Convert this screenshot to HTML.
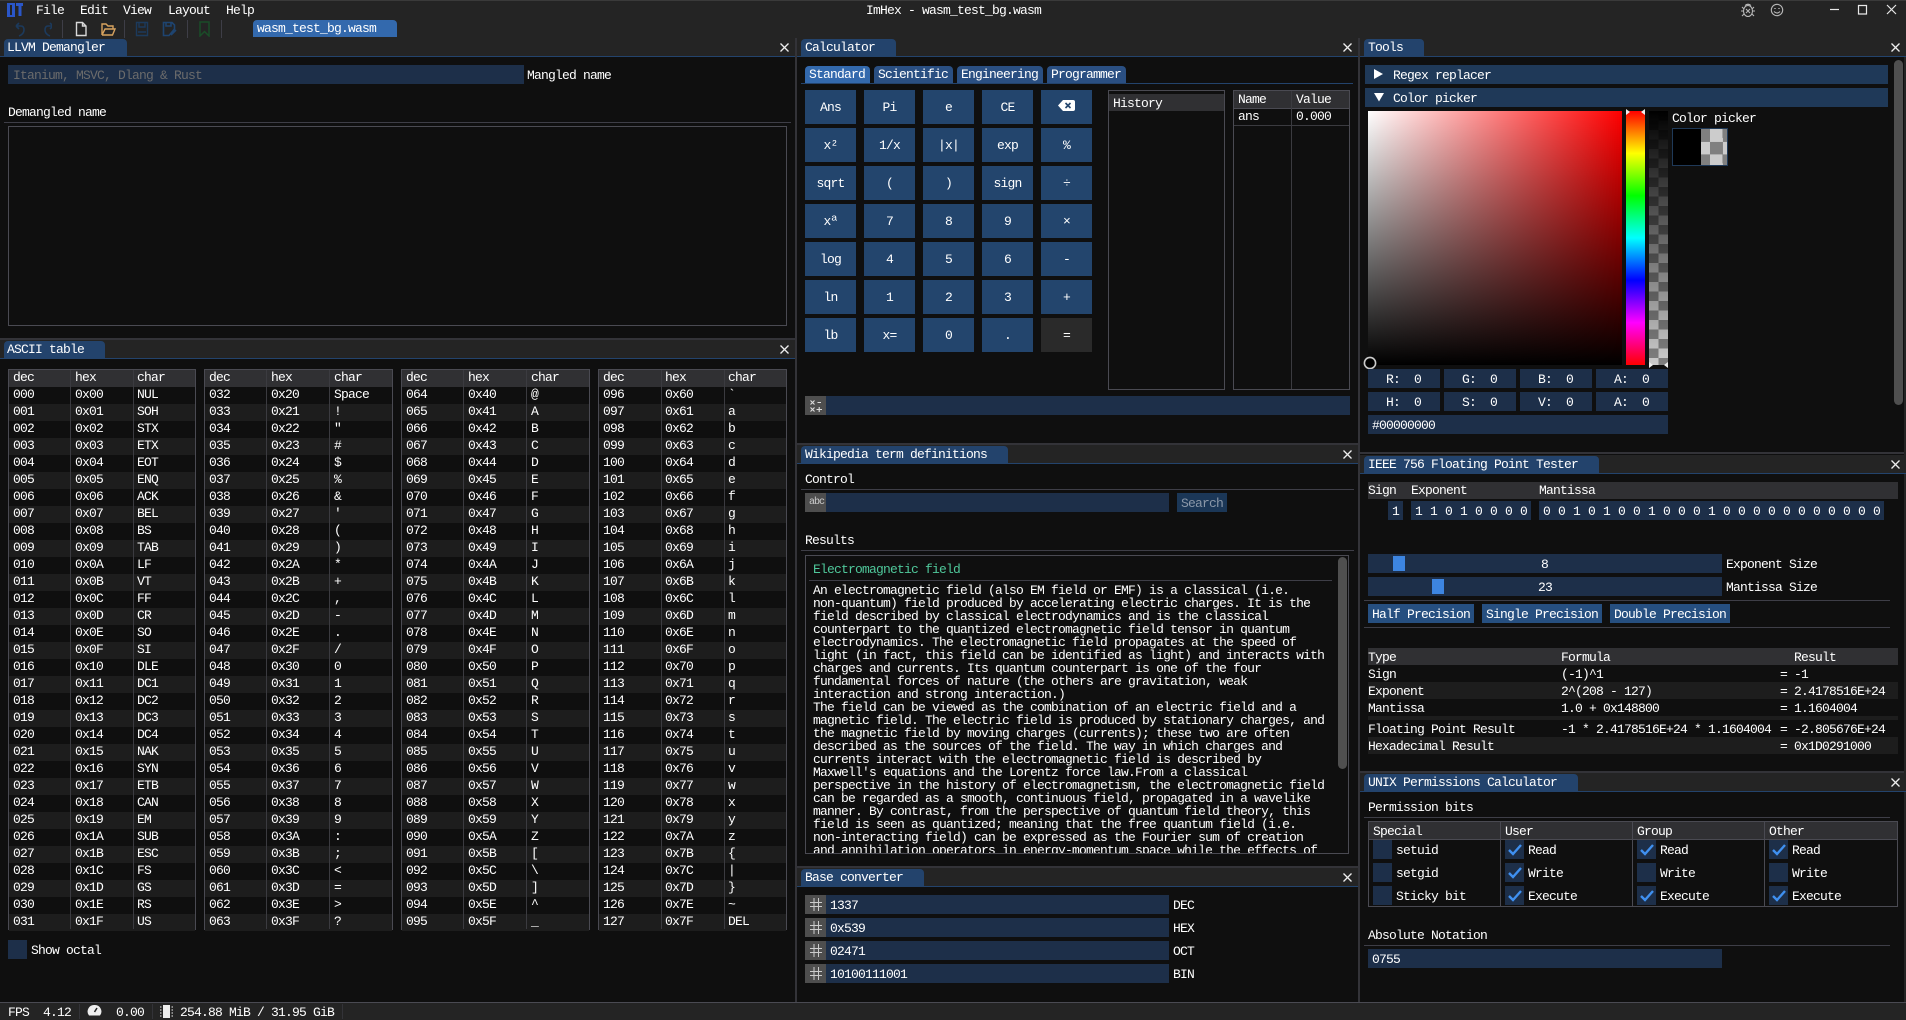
<!DOCTYPE html>
<html><head><meta charset="utf-8"><title>ImHex</title>
<style>
html,body{margin:0;padding:0;background:#0f0f0f}
#r{position:relative;width:1906px;height:1020px;overflow:hidden;background:#0f0f0f;font:13px/14px "Liberation Mono",monospace;letter-spacing:-.8px;color:#fff}
#r div,#r svg{position:absolute;display:block}
b{position:absolute;font-weight:normal;white-space:pre;transform:translateY(1px)}
.tb{background:#242424;height:18px}
.ln{background:#23436c;height:1px}
.tab{background:#23436c;border-radius:4px 4px 0 0;height:17px;overflow:visible}
.tab b{left:4px;top:1px}
.sp{background:#333338}
.sep{background:#3e3e47;height:1px}
.in{background:#1d2f49;height:19px}
.ic{background:#4e4e4e;height:19px;width:21px}
.btn{background:#23456d;display:flex!important;align-items:center;justify-content:center;box-sizing:border-box;padding-top:2px}
.h{background:#1f3958;height:19px}
.bd{box-sizing:border-box;border:1px solid #4a4a52}
.th{background:#303033;height:17px}
.st{background:#1d1d1d;height:17px}
.cb{background:#1d2f49;width:19px;height:19px}
.vl{background:#3b3b40;width:1px}
.at{top:369px;height:561px;box-sizing:border-box;border:1px solid #4a4a52;background:#0f0f0f}
.at p{margin:0;height:17px;display:flex;padding-left:4px}
.at p:nth-child(odd){background:#1d1d1d}
.at p:first-child{background:#303033}
.at p b{position:static;width:62px;flex:none}
.at p b+b{width:63px}
.at.f p b+b{width:62px}
.wp{font:13px/13px "Liberation Mono",monospace;letter-spacing:-.8px;margin:0;left:813px;top:584px;white-space:pre;position:absolute}
</style></head><body><div id="r">

<!-- title/menu -->
<div style="left:0;top:0;width:1906px;height:38px;background:#242424"></div>
<div style="left:0;top:0;width:1906px;height:1px;background:#3a3a3a"></div>
<svg style="left:7px;top:2px" width="17" height="16" viewBox="0 0 17 16"><path d="M0 1H8V15H0Z M3 3V13H5V3Z" fill="#2a56c8" fill-rule="evenodd"/><path d="M9 1H16V4H14.5V14H11.5V4H9Z" fill="#2a56c8"/></svg>
<b style="left:36px;top:3px">File</b><b style="left:80px;top:3px">Edit</b><b style="left:123px;top:3px">View</b><b style="left:168px;top:3px">Layout</b><b style="left:226px;top:3px">Help</b>
<b style="left:866px;top:3px">ImHex - wasm_test_bg.wasm</b>

<!-- toolbar icons -->
<svg style="left:12px;top:21px" width="40" height="17" viewBox="0 0 40 17" fill="none" stroke="#1c3a5c" stroke-width="1.6"><path d="M4 5L7 2M4 5L7 8M4 5H9Q12 5 12 9T7 15"/><path d="M41 5L38 2M41 5L38 8M41 5H36Q33 5 33 9T38 15"/></svg>
<div style="left:62px;top:20px;width:1px;height:18px;background:#3e3e47"></div>
<svg style="left:74px;top:21px" width="14" height="16" viewBox="0 0 14 16" fill="none" stroke="#d8d8d8" stroke-width="1.4"><path d="M2.5 1.5H8.5L12 5V14.5H2.5ZM8.5 1.5V5H12"/></svg>
<svg style="left:100px;top:21px" width="16" height="16" viewBox="0 0 16 16" fill="none" stroke="#d8a35e" stroke-width="1.4"><path d="M2 14V3H6L8 5H13V8M2 14H12.5L15 8H5L2 14"/></svg>
<div style="left:124px;top:20px;width:1px;height:18px;background:#3e3e47"></div>
<svg style="left:135px;top:21px" width="14" height="16" viewBox="0 0 14 16" fill="none" stroke="#1c3a5c" stroke-width="1.4"><path d="M1.5 1.5H12.5V14.5H1.5ZM4 1.5V6H10V1.5M3 11H11"/></svg>
<svg style="left:162px;top:21px" width="16" height="16" viewBox="0 0 16 16" fill="none" stroke="#1e4470" stroke-width="1.6"><path d="M1.5 1.5H10L12.5 4V8L7 14.5H1.5ZM4 1.5V5H9V1.5M14 9L9 14"/></svg>
<div style="left:187px;top:20px;width:1px;height:18px;background:#3e3e47"></div>
<svg style="left:199px;top:21px" width="11" height="16" viewBox="0 0 11 16" fill="none" stroke="#1a4d28" stroke-width="1.5"><path d="M1 1H10V15L5.5 10.5L1 15Z"/></svg>
<div style="left:221px;top:20px;width:1px;height:18px;background:#3e3e47"></div>
<div style="left:253px;top:20px;width:144px;height:17px;background:#3369ad;border-radius:4px 4px 0 0"><b style="left:4px;top:1px">wasm_test_bg.wasm</b></div>

<!-- window controls -->
<svg style="left:1739px;top:2px" width="18" height="16" viewBox="0 0 18 16" fill="none" stroke="#b8b8b8" stroke-width="1.1"><ellipse cx="9" cy="9" rx="4.5" ry="5.5"/><path d="M6 3.5Q9 1 12 3.5M3 5L5 7M15 5L13 7M2 9H4.5M16 9H13.5M3 14L5 12M15 14L13 12M7 7L11 11M11 7L7 11"/></svg>
<svg style="left:1769px;top:2px" width="16" height="16" viewBox="0 0 16 16" fill="none" stroke="#b8b8b8" stroke-width="1.1"><circle cx="8" cy="8" r="5.7"/><path d="M5 9.5Q8 12.5 11 9.5"/><path d="M6 6V7M10 6V7" stroke-width="1.4"/></svg>
<svg style="left:1828px;top:2px" width="70" height="16" viewBox="0 0 70 16" fill="none" stroke="#e8e8e8" stroke-width="1.2"><path d="M2 7.5H11"/><path d="M30.5 3.5H38.5V12H30.5Z"/><path d="M59 3L68 12M68 3L59 12"/></svg>

<!-- splitters -->
<div class="sp" style="left:795px;top:38px;width:2px;height:964px"></div>
<div class="sp" style="left:1358px;top:38px;width:2px;height:964px"></div>
<div class="sp" style="left:0;top:338px;width:795px;height:2px"></div>
<div class="sp" style="left:797px;top:443px;width:561px;height:2px"></div>
<div class="sp" style="left:797px;top:866px;width:561px;height:2px"></div>
<div class="sp" style="left:1360px;top:452px;width:546px;height:2px"></div>
<div class="sp" style="left:1360px;top:771px;width:546px;height:2px"></div>
<div style="left:1904px;top:38px;width:2px;height:964px;background:#242424"></div>

<!-- tab bars -->
<div class="tb" style="left:0;top:38px;width:795px"></div><div class="ln" style="left:0;top:56px;width:795px"></div>
<div class="tb" style="left:0;top:340px;width:795px"></div><div class="ln" style="left:0;top:358px;width:795px"></div>
<div class="tb" style="left:797px;top:38px;width:561px"></div><div class="ln" style="left:797px;top:56px;width:561px"></div>
<div class="tb" style="left:797px;top:445px;width:561px"></div><div class="ln" style="left:797px;top:463px;width:561px"></div>
<div class="tb" style="left:797px;top:868px;width:561px"></div><div class="ln" style="left:797px;top:886px;width:561px"></div>
<div class="tb" style="left:1360px;top:38px;width:546px"></div><div class="ln" style="left:1360px;top:56px;width:546px"></div>
<div class="tb" style="left:1360px;top:455px;width:546px"></div><div class="ln" style="left:1360px;top:473px;width:546px"></div>
<div class="tb" style="left:1360px;top:773px;width:546px"></div><div class="ln" style="left:1360px;top:791px;width:546px"></div>

<div class="tab" style="left:4px;top:39px;width:123px"><b style="left:3px">LLVM Demangler</b></div>
<div class="tab" style="left:4px;top:341px;width:101px"><b style="left:3px">ASCII table</b></div>
<div class="tab" style="left:801px;top:39px;width:95px"><b>Calculator</b></div>
<div class="tab" style="left:801px;top:446px;width:207px"><b>Wikipedia term definitions</b></div>
<div class="tab" style="left:801px;top:869px;width:123px"><b>Base converter</b></div>
<div class="tab" style="left:1364px;top:39px;width:60px"><b>Tools</b></div>
<div class="tab" style="left:1364px;top:456px;width:235px"><b>IEEE 756 Floating Point Tester</b></div>
<div class="tab" style="left:1364px;top:774px;width:214px"><b>UNIX Permissions Calculator</b></div>

<!-- close icons -->
<svg style="left:780px;top:43px" width="9" height="9" viewBox="0 0 9 9" stroke="#eee" stroke-width="1.3"><path d="M.5 .5L8.5 8.5M8.5 .5L.5 8.5"/></svg>
<svg style="left:780px;top:345px" width="9" height="9" viewBox="0 0 9 9" stroke="#eee" stroke-width="1.3"><path d="M.5 .5L8.5 8.5M8.5 .5L.5 8.5"/></svg>
<svg style="left:1343px;top:43px" width="9" height="9" viewBox="0 0 9 9" stroke="#eee" stroke-width="1.3"><path d="M.5 .5L8.5 8.5M8.5 .5L.5 8.5"/></svg>
<svg style="left:1343px;top:450px" width="9" height="9" viewBox="0 0 9 9" stroke="#eee" stroke-width="1.3"><path d="M.5 .5L8.5 8.5M8.5 .5L.5 8.5"/></svg>
<svg style="left:1343px;top:873px" width="9" height="9" viewBox="0 0 9 9" stroke="#eee" stroke-width="1.3"><path d="M.5 .5L8.5 8.5M8.5 .5L.5 8.5"/></svg>
<svg style="left:1891px;top:43px" width="9" height="9" viewBox="0 0 9 9" stroke="#eee" stroke-width="1.3"><path d="M.5 .5L8.5 8.5M8.5 .5L.5 8.5"/></svg>
<svg style="left:1891px;top:460px" width="9" height="9" viewBox="0 0 9 9" stroke="#eee" stroke-width="1.3"><path d="M.5 .5L8.5 8.5M8.5 .5L.5 8.5"/></svg>
<svg style="left:1891px;top:778px" width="9" height="9" viewBox="0 0 9 9" stroke="#eee" stroke-width="1.3"><path d="M.5 .5L8.5 8.5M8.5 .5L.5 8.5"/></svg>

<!-- LLVM -->
<div class="in" style="left:8px;top:65px;width:516px"><b style="left:5px;top:3px;color:#6b6b6b">Itanium, MSVC, Dlang &amp; Rust</b></div>
<b style="left:527px;top:68px">Mangled name</b>
<b style="left:8px;top:105px">Demangled name</b>
<div class="sep" style="left:4px;top:122px;width:787px"></div>
<div class="bd" style="left:8px;top:126px;width:779px;height:200px"></div>

<!-- ASCII tables -->
<div class="at f" style="left:8px;width:188px">
<p><b>dec</b><b>hex</b><b>char</b></p>
<p><b>000</b><b>0x00</b><b>NUL</b></p><p><b>001</b><b>0x01</b><b>SOH</b></p><p><b>002</b><b>0x02</b><b>STX</b></p><p><b>003</b><b>0x03</b><b>ETX</b></p><p><b>004</b><b>0x04</b><b>EOT</b></p><p><b>005</b><b>0x05</b><b>ENQ</b></p><p><b>006</b><b>0x06</b><b>ACK</b></p><p><b>007</b><b>0x07</b><b>BEL</b></p><p><b>008</b><b>0x08</b><b>BS</b></p><p><b>009</b><b>0x09</b><b>TAB</b></p><p><b>010</b><b>0x0A</b><b>LF</b></p><p><b>011</b><b>0x0B</b><b>VT</b></p><p><b>012</b><b>0x0C</b><b>FF</b></p><p><b>013</b><b>0x0D</b><b>CR</b></p><p><b>014</b><b>0x0E</b><b>SO</b></p><p><b>015</b><b>0x0F</b><b>SI</b></p><p><b>016</b><b>0x10</b><b>DLE</b></p><p><b>017</b><b>0x11</b><b>DC1</b></p><p><b>018</b><b>0x12</b><b>DC2</b></p><p><b>019</b><b>0x13</b><b>DC3</b></p><p><b>020</b><b>0x14</b><b>DC4</b></p><p><b>021</b><b>0x15</b><b>NAK</b></p><p><b>022</b><b>0x16</b><b>SYN</b></p><p><b>023</b><b>0x17</b><b>ETB</b></p><p><b>024</b><b>0x18</b><b>CAN</b></p><p><b>025</b><b>0x19</b><b>EM</b></p><p><b>026</b><b>0x1A</b><b>SUB</b></p><p><b>027</b><b>0x1B</b><b>ESC</b></p><p><b>028</b><b>0x1C</b><b>FS</b></p><p><b>029</b><b>0x1D</b><b>GS</b></p><p><b>030</b><b>0x1E</b><b>RS</b></p><p><b>031</b><b>0x1F</b><b>US</b></p>
<div class="vl" style="left:61px;top:0;height:559px"></div><div class="vl" style="left:124px;top:0;height:559px"></div>
</div>
<div class="at" style="left:204px;width:189px">
<p><b>dec</b><b>hex</b><b>char</b></p>
<p><b>032</b><b>0x20</b><b>Space</b></p><p><b>033</b><b>0x21</b><b>!</b></p><p><b>034</b><b>0x22</b><b>"</b></p><p><b>035</b><b>0x23</b><b>#</b></p><p><b>036</b><b>0x24</b><b>$</b></p><p><b>037</b><b>0x25</b><b>%</b></p><p><b>038</b><b>0x26</b><b>&amp;</b></p><p><b>039</b><b>0x27</b><b>'</b></p><p><b>040</b><b>0x28</b><b>(</b></p><p><b>041</b><b>0x29</b><b>)</b></p><p><b>042</b><b>0x2A</b><b>*</b></p><p><b>043</b><b>0x2B</b><b>+</b></p><p><b>044</b><b>0x2C</b><b>,</b></p><p><b>045</b><b>0x2D</b><b>-</b></p><p><b>046</b><b>0x2E</b><b>.</b></p><p><b>047</b><b>0x2F</b><b>/</b></p><p><b>048</b><b>0x30</b><b>0</b></p><p><b>049</b><b>0x31</b><b>1</b></p><p><b>050</b><b>0x32</b><b>2</b></p><p><b>051</b><b>0x33</b><b>3</b></p><p><b>052</b><b>0x34</b><b>4</b></p><p><b>053</b><b>0x35</b><b>5</b></p><p><b>054</b><b>0x36</b><b>6</b></p><p><b>055</b><b>0x37</b><b>7</b></p><p><b>056</b><b>0x38</b><b>8</b></p><p><b>057</b><b>0x39</b><b>9</b></p><p><b>058</b><b>0x3A</b><b>:</b></p><p><b>059</b><b>0x3B</b><b>;</b></p><p><b>060</b><b>0x3C</b><b>&lt;</b></p><p><b>061</b><b>0x3D</b><b>=</b></p><p><b>062</b><b>0x3E</b><b>&gt;</b></p><p><b>063</b><b>0x3F</b><b>?</b></p>
<div class="vl" style="left:61px;top:0;height:559px"></div><div class="vl" style="left:124px;top:0;height:559px"></div>
</div>
<div class="at" style="left:401px;width:189px">
<p><b>dec</b><b>hex</b><b>char</b></p>
<p><b>064</b><b>0x40</b><b>@</b></p><p><b>065</b><b>0x41</b><b>A</b></p><p><b>066</b><b>0x42</b><b>B</b></p><p><b>067</b><b>0x43</b><b>C</b></p><p><b>068</b><b>0x44</b><b>D</b></p><p><b>069</b><b>0x45</b><b>E</b></p><p><b>070</b><b>0x46</b><b>F</b></p><p><b>071</b><b>0x47</b><b>G</b></p><p><b>072</b><b>0x48</b><b>H</b></p><p><b>073</b><b>0x49</b><b>I</b></p><p><b>074</b><b>0x4A</b><b>J</b></p><p><b>075</b><b>0x4B</b><b>K</b></p><p><b>076</b><b>0x4C</b><b>L</b></p><p><b>077</b><b>0x4D</b><b>M</b></p><p><b>078</b><b>0x4E</b><b>N</b></p><p><b>079</b><b>0x4F</b><b>O</b></p><p><b>080</b><b>0x50</b><b>P</b></p><p><b>081</b><b>0x51</b><b>Q</b></p><p><b>082</b><b>0x52</b><b>R</b></p><p><b>083</b><b>0x53</b><b>S</b></p><p><b>084</b><b>0x54</b><b>T</b></p><p><b>085</b><b>0x55</b><b>U</b></p><p><b>086</b><b>0x56</b><b>V</b></p><p><b>087</b><b>0x57</b><b>W</b></p><p><b>088</b><b>0x58</b><b>X</b></p><p><b>089</b><b>0x59</b><b>Y</b></p><p><b>090</b><b>0x5A</b><b>Z</b></p><p><b>091</b><b>0x5B</b><b>[</b></p><p><b>092</b><b>0x5C</b><b>\</b></p><p><b>093</b><b>0x5D</b><b>]</b></p><p><b>094</b><b>0x5E</b><b>^</b></p><p><b>095</b><b>0x5F</b><b>_</b></p>
<div class="vl" style="left:61px;top:0;height:559px"></div><div class="vl" style="left:124px;top:0;height:559px"></div>
</div>
<div class="at" style="left:598px;width:189px">
<p><b>dec</b><b>hex</b><b>char</b></p>
<p><b>096</b><b>0x60</b><b>`</b></p><p><b>097</b><b>0x61</b><b>a</b></p><p><b>098</b><b>0x62</b><b>b</b></p><p><b>099</b><b>0x63</b><b>c</b></p><p><b>100</b><b>0x64</b><b>d</b></p><p><b>101</b><b>0x65</b><b>e</b></p><p><b>102</b><b>0x66</b><b>f</b></p><p><b>103</b><b>0x67</b><b>g</b></p><p><b>104</b><b>0x68</b><b>h</b></p><p><b>105</b><b>0x69</b><b>i</b></p><p><b>106</b><b>0x6A</b><b>j</b></p><p><b>107</b><b>0x6B</b><b>k</b></p><p><b>108</b><b>0x6C</b><b>l</b></p><p><b>109</b><b>0x6D</b><b>m</b></p><p><b>110</b><b>0x6E</b><b>n</b></p><p><b>111</b><b>0x6F</b><b>o</b></p><p><b>112</b><b>0x70</b><b>p</b></p><p><b>113</b><b>0x71</b><b>q</b></p><p><b>114</b><b>0x72</b><b>r</b></p><p><b>115</b><b>0x73</b><b>s</b></p><p><b>116</b><b>0x74</b><b>t</b></p><p><b>117</b><b>0x75</b><b>u</b></p><p><b>118</b><b>0x76</b><b>v</b></p><p><b>119</b><b>0x77</b><b>w</b></p><p><b>120</b><b>0x78</b><b>x</b></p><p><b>121</b><b>0x79</b><b>y</b></p><p><b>122</b><b>0x7A</b><b>z</b></p><p><b>123</b><b>0x7B</b><b>{</b></p><p><b>124</b><b>0x7C</b><b>|</b></p><p><b>125</b><b>0x7D</b><b>}</b></p><p><b>126</b><b>0x7E</b><b>~</b></p><p><b>127</b><b>0x7F</b><b>DEL</b></p>
<div class="vl" style="left:62px;top:0;height:559px"></div><div class="vl" style="left:125px;top:0;height:559px"></div>
</div>
<div class="cb" style="left:8px;top:940px"></div>
<b style="left:31px;top:943px">Show octal</b>

<!-- Calculator -->
<div class="ln" style="left:801px;top:83px;width:552px"></div>
<div style="left:805px;top:66px;width:65px;height:17px;background:#3369ad;border-radius:4px 4px 0 0"><b style="left:4px;top:1px">Standard</b></div>
<div style="left:874px;top:66px;width:79px;height:17px;background:#2a4f82;border-radius:4px 4px 0 0"><b style="left:4px;top:1px">Scientific</b></div>
<div style="left:957px;top:66px;width:86px;height:17px;background:#2a4f82;border-radius:4px 4px 0 0"><b style="left:4px;top:1px">Engineering</b></div>
<div style="left:1047px;top:66px;width:79px;height:17px;background:#2a4f82;border-radius:4px 4px 0 0"><b style="left:4px;top:1px">Programmer</b></div>

<div class="btn" style="left:805px;top:90px;width:51px;height:34px">Ans</div><div class="btn" style="left:864px;top:90px;width:51px;height:34px">Pi</div><div class="btn" style="left:923px;top:90px;width:51px;height:34px">e</div><div class="btn" style="left:982px;top:90px;width:51px;height:34px">CE</div><div class="btn" style="left:1041px;top:90px;width:51px;height:34px"><svg style="left:17px;top:10px" width="17" height="11" viewBox="0 0 17 11"><path d="M5 0H15Q17 0 17 2V9Q17 11 15 11H5L0 5.5Z" fill="#fff"/><path d="M7.5 3L12.5 8M12.5 3L7.5 8" stroke="#23456d" stroke-width="1.6"/></svg></div>
<div class="btn" style="left:805px;top:128px;width:51px;height:34px">x²</div><div class="btn" style="left:864px;top:128px;width:51px;height:34px">1/x</div><div class="btn" style="left:923px;top:128px;width:51px;height:34px">|x|</div><div class="btn" style="left:982px;top:128px;width:51px;height:34px">exp</div><div class="btn" style="left:1041px;top:128px;width:51px;height:34px">%</div>
<div class="btn" style="left:805px;top:166px;width:51px;height:34px">sqrt</div><div class="btn" style="left:864px;top:166px;width:51px;height:34px">(</div><div class="btn" style="left:923px;top:166px;width:51px;height:34px">)</div><div class="btn" style="left:982px;top:166px;width:51px;height:34px">sign</div><div class="btn" style="left:1041px;top:166px;width:51px;height:34px">÷</div>
<div class="btn" style="left:805px;top:204px;width:51px;height:34px">xª</div><div class="btn" style="left:864px;top:204px;width:51px;height:34px">7</div><div class="btn" style="left:923px;top:204px;width:51px;height:34px">8</div><div class="btn" style="left:982px;top:204px;width:51px;height:34px">9</div><div class="btn" style="left:1041px;top:204px;width:51px;height:34px">×</div>
<div class="btn" style="left:805px;top:242px;width:51px;height:34px">log</div><div class="btn" style="left:864px;top:242px;width:51px;height:34px">4</div><div class="btn" style="left:923px;top:242px;width:51px;height:34px">5</div><div class="btn" style="left:982px;top:242px;width:51px;height:34px">6</div><div class="btn" style="left:1041px;top:242px;width:51px;height:34px">-</div>
<div class="btn" style="left:805px;top:280px;width:51px;height:34px">ln</div><div class="btn" style="left:864px;top:280px;width:51px;height:34px">1</div><div class="btn" style="left:923px;top:280px;width:51px;height:34px">2</div><div class="btn" style="left:982px;top:280px;width:51px;height:34px">3</div><div class="btn" style="left:1041px;top:280px;width:51px;height:34px">+</div>
<div class="btn" style="left:805px;top:318px;width:51px;height:34px">lb</div><div class="btn" style="left:864px;top:318px;width:51px;height:34px">x=</div><div class="btn" style="left:923px;top:318px;width:51px;height:34px">0</div><div class="btn" style="left:982px;top:318px;width:51px;height:34px">.</div><div class="btn" style="left:1041px;top:318px;width:51px;height:34px;background:#2a2a2a">=</div>

<div class="bd" style="left:1108px;top:90px;width:117px;height:300px"><div class="th" style="left:0;top:3px;width:115px"><b style="left:4px;top:2px">History</b></div></div>
<div class="bd" style="left:1233px;top:90px;width:117px;height:300px"><div class="th" style="left:0;top:0;width:115px;border-bottom:1px solid #4a4a52"><b style="left:4px;top:1px">Name</b><b style="left:62px;top:1px">Value</b></div><div style="left:0;top:34px;width:115px;height:1px;background:#3b3b40"></div><b style="left:4px;top:18px">ans</b><b style="left:62px;top:18px">0.000</b><div class="vl" style="left:57px;top:0;height:298px"></div></div>
<div class="in" style="left:805px;top:396px;width:545px"></div>
<div class="ic" style="left:805px;top:396px"><svg style="left:5px;top:4px" width="12" height="12" viewBox="0 0 12 12" stroke="#ddd" stroke-width="1.1" fill="none"><path d="M.5 .5L4.5 4.5M4.5 .5L.5 4.5M7.5 2.5H11M.5 7.5L4.5 11.5M4.5 7.5L.5 11.5M6.5 9.5H12M9.2 7V12"/></svg></div>

<!-- Wikipedia -->
<b style="left:805px;top:472px">Control</b>
<div class="sep" style="left:801px;top:489px;width:553px"></div>
<div class="in" style="left:805px;top:493px;width:364px"></div>
<div class="ic" style="left:805px;top:493px"><b style="left:4px;top:2px;font-size:10px;letter-spacing:-1px;color:#ccc">abc</b></div>
<div class="btn" style="left:1177px;top:493px;width:50px;height:19px;background:#1b3757;color:#8a97a8">Search</div>
<b style="left:805px;top:533px">Results</b>
<div class="sep" style="left:801px;top:550px;width:553px"></div>
<div class="bd" style="left:805px;top:555px;width:544px;height:299px;overflow:hidden">
<pre class="wp" style="left:7px;top:28px">An electromagnetic field (also EM field or EMF) is a classical (i.e.
non-quantum) field produced by accelerating electric charges. It is the
field described by classical electrodynamics and is the classical
counterpart to the quantized electromagnetic field tensor in quantum
electrodynamics. The electromagnetic field propagates at the speed of
light (in fact, this field can be identified as light) and interacts with
charges and currents. Its quantum counterpart is one of the four
fundamental forces of nature (the others are gravitation, weak
interaction and strong interaction.)
The field can be viewed as the combination of an electric field and a
magnetic field. The electric field is produced by stationary charges, and
the magnetic field by moving charges (currents); these two are often
described as the sources of the field. The way in which charges and
currents interact with the electromagnetic field is described by
Maxwell's equations and the Lorentz force law.From a classical
perspective in the history of electromagnetism, the electromagnetic field
can be regarded as a smooth, continuous field, propagated in a wavelike
manner. By contrast, from the perspective of quantum field theory, this
field is seen as quantized; meaning that the free quantum field (i.e.
non-interacting field) can be expressed as the Fourier sum of creation
and annihilation operators in energy-momentum space while the effects of</pre>
<b style="left:7px;top:6px;color:#4fc79a">Electromagnetic field</b>
<div class="sep" style="left:3px;top:24px;width:523px"></div>
<div style="left:532px;top:1px;width:9px;height:212px;background:#4f4f4f;border-radius:5px"></div>
</div>

<!-- Base converter -->
<div class="in" style="left:805px;top:895px;width:364px"><b style="left:25px;top:3px">1337</b></div><div class="ic" style="left:805px;top:895px"><svg style="left:5px;top:3px" width="12" height="13" stroke="#ccc"><path d="M4 0V13M8.5 0V13M0 4.5H12M0 8.5H12"/></svg></div><b style="left:1173px;top:898px">DEC</b>
<div class="in" style="left:805px;top:918px;width:364px"><b style="left:25px;top:3px">0x539</b></div><div class="ic" style="left:805px;top:918px"><svg style="left:5px;top:3px" width="12" height="13" stroke="#ccc"><path d="M4 0V13M8.5 0V13M0 4.5H12M0 8.5H12"/></svg></div><b style="left:1173px;top:921px">HEX</b>
<div class="in" style="left:805px;top:941px;width:364px"><b style="left:25px;top:3px">02471</b></div><div class="ic" style="left:805px;top:941px"><svg style="left:5px;top:3px" width="12" height="13" stroke="#ccc"><path d="M4 0V13M8.5 0V13M0 4.5H12M0 8.5H12"/></svg></div><b style="left:1173px;top:944px">OCT</b>
<div class="in" style="left:805px;top:964px;width:364px"><b style="left:25px;top:3px">10100111001</b></div><div class="ic" style="left:805px;top:964px"><svg style="left:5px;top:3px" width="12" height="13" stroke="#ccc"><path d="M4 0V13M8.5 0V13M0 4.5H12M0 8.5H12"/></svg></div><b style="left:1173px;top:967px">BIN</b>

<!-- Tools -->
<div class="h" style="left:1365px;top:65px;width:523px"><svg style="left:9px;top:4px" width="10" height="10"><path d="M0 0L9 5L0 10Z" fill="#fff"/></svg><b style="left:28px;top:3px">Regex replacer</b></div>
<div class="h" style="left:1365px;top:88px;width:523px"><svg style="left:9px;top:4px" width="10" height="10"><path d="M0 1H10L5 9.5Z" fill="#fff"/></svg><b style="left:28px;top:3px">Color picker</b></div>
<div style="left:1368px;top:111px;width:254px;height:254px;background:linear-gradient(to top,#000,rgba(0,0,0,0)),linear-gradient(to right,#fff,#f00)"></div>
<div style="left:1626px;top:111px;width:19px;height:254px;background:linear-gradient(to bottom,#f00,#ff0 16.67%,#0f0 33.33%,#0ff 50%,#00f 66.67%,#f0f 83.33%,#f00)"></div>
<svg style="left:1623px;top:108px" width="25" height="8"><path d="M3 1L3 7L7 4Z M22 1L22 7L18 4Z" fill="#eee"/></svg>
<div style="left:1649px;top:111px;width:19px;height:254px;background:linear-gradient(#000,rgba(0,0,0,0)),repeating-conic-gradient(#808080 0 25%,#ccc 0 50%) 0 0/19px 19px"></div>
<svg style="left:1646px;top:361px" width="25" height="8"><path d="M3 1L3 7L7 4Z M22 1L22 7L18 4Z" fill="#eee"/></svg>
<svg style="left:1363px;top:356px" width="14" height="14"><circle cx="7" cy="7" r="5.6" fill="#000" stroke="#ccc" stroke-width="1.6"/></svg>
<b style="left:1672px;top:111px">Color picker</b>
<div style="left:1672px;top:128px;width:56px;height:38px;box-sizing:border-box;border:1px solid #1f3958;background:#000"><div style="left:28px;top:0;width:26px;height:36px;background:repeating-conic-gradient(#808080 0 25%,#ccc 0 50%) 9px 0/25.4px 25.4px"></div></div>
<div class="in" style="left:1368px;top:369px;width:72px"><b style="left:18px;top:3px">R:  0</b></div><div class="in" style="left:1444px;top:369px;width:72px"><b style="left:18px;top:3px">G:  0</b></div><div class="in" style="left:1520px;top:369px;width:72px"><b style="left:18px;top:3px">B:  0</b></div><div class="in" style="left:1596px;top:369px;width:72px"><b style="left:18px;top:3px">A:  0</b></div>
<div class="in" style="left:1368px;top:392px;width:72px"><b style="left:18px;top:3px">H:  0</b></div><div class="in" style="left:1444px;top:392px;width:72px"><b style="left:18px;top:3px">S:  0</b></div><div class="in" style="left:1520px;top:392px;width:72px"><b style="left:18px;top:3px">V:  0</b></div><div class="in" style="left:1596px;top:392px;width:72px"><b style="left:18px;top:3px">A:  0</b></div>
<div class="in" style="left:1368px;top:415px;width:300px"><b style="left:4px;top:3px">#00000000</b></div>
<div style="left:1894px;top:60px;width:9px;height:345px;background:#4f4f4f;border-radius:5px"></div>

<!-- IEEE -->
<div class="th" style="left:1368px;top:482px;width:530px"><b style="left:0;top:1px">Sign</b><b style="left:43px;top:1px">Exponent</b><b style="left:171px;top:1px">Mantissa</b></div>
<div class="in" style="left:1388px;top:501px;width:15px"><b style="left:4px;top:3px">1</b></div>
<div class="in" style="left:1411px;top:501px;width:120px"><b style="left:4px;top:3px;letter-spacing:7.2px">11010000</b></div>
<div class="in" style="left:1539px;top:501px;width:345px"><b style="left:4px;top:3px;letter-spacing:7.2px">00101001000100000000000</b></div>
<div class="in" style="left:1368px;top:554px;width:354px"><div style="left:25px;top:2px;width:12px;height:15px;background:#3d85e0"></div><b style="left:173px;top:3px">8</b></div><b style="left:1726px;top:557px">Exponent Size</b>
<div class="in" style="left:1368px;top:577px;width:354px"><div style="left:64px;top:2px;width:12px;height:15px;background:#3d85e0"></div><b style="left:170px;top:3px">23</b></div><b style="left:1726px;top:580px">Mantissa Size</b>
<div class="sep" style="left:1364px;top:600px;width:526px"></div>
<div class="btn" style="left:1368px;top:604px;width:106px;height:19px;background:#264f80">Half Precision</div>
<div class="btn" style="left:1482px;top:604px;width:120px;height:19px;background:#264f80">Single Precision</div>
<div class="btn" style="left:1610px;top:604px;width:120px;height:19px;background:#264f80">Double Precision</div>
<div class="sep" style="left:1364px;top:627px;width:526px"></div>
<div class="th" style="left:1368px;top:648px;width:530px"></div>
<div class="st" style="left:1368px;top:682px;width:530px"></div>
<div class="st" style="left:1368px;top:716px;width:530px;height:4px"></div>
<div class="st" style="left:1368px;top:737px;width:530px"></div>
<b style="left:1368px;top:650px">Type</b><b style="left:1561px;top:650px">Formula</b><b style="left:1794px;top:650px">Result</b>
<b style="left:1368px;top:667px">Sign</b><b style="left:1561px;top:667px">(-1)^1</b><b style="left:1780px;top:667px">= -1</b>
<b style="left:1368px;top:684px">Exponent</b><b style="left:1561px;top:684px">2^(208 - 127)</b><b style="left:1780px;top:684px">= 2.4178516E+24</b>
<b style="left:1368px;top:701px">Mantissa</b><b style="left:1561px;top:701px">1.0 + 0x148800</b><b style="left:1780px;top:701px">= 1.1604004</b>
<b style="left:1368px;top:722px">Floating Point Result</b><b style="left:1561px;top:722px">-1 * 2.4178516E+24 * 1.1604004</b><b style="left:1780px;top:722px">= -2.805676E+24</b>
<b style="left:1368px;top:739px">Hexadecimal Result</b><b style="left:1780px;top:739px">= 0x1D0291000</b>

<!-- UNIX -->
<b style="left:1368px;top:800px">Permission bits</b>
<div class="sep" style="left:1364px;top:817px;width:526px"></div>
<div class="bd" style="left:1368px;top:821px;width:530px;height:86px"><div class="th" style="left:0;top:0;width:528px;border-bottom:1px solid #4a4a52"></div></div>
<div class="vl" style="left:1500px;top:822px;height:85px;background:#4a4a52"></div><div class="vl" style="left:1632px;top:822px;height:85px;background:#4a4a52"></div><div class="vl" style="left:1764px;top:822px;height:85px;background:#4a4a52"></div>
<b style="left:1373px;top:824px">Special</b><b style="left:1505px;top:824px">User</b><b style="left:1637px;top:824px">Group</b><b style="left:1769px;top:824px">Other</b>

<div class="cb" style="left:1373px;top:840px"></div><b style="left:1396px;top:843px">setuid</b>
<div class="cb" style="left:1373px;top:863px"></div><b style="left:1396px;top:866px">setgid</b>
<div class="cb" style="left:1373px;top:886px"></div><b style="left:1396px;top:889px">Sticky bit</b>
<div class="cb" style="left:1505px;top:840px"><svg style="left:3px;top:4px" width="14" height="12" fill="none" stroke="#3f90f0" stroke-width="2.4"><path d="M1 6L5 10L13 1"/></svg></div><b style="left:1528px;top:843px">Read</b>
<div class="cb" style="left:1505px;top:863px"><svg style="left:3px;top:4px" width="14" height="12" fill="none" stroke="#3f90f0" stroke-width="2.4"><path d="M1 6L5 10L13 1"/></svg></div><b style="left:1528px;top:866px">Write</b>
<div class="cb" style="left:1505px;top:886px"><svg style="left:3px;top:4px" width="14" height="12" fill="none" stroke="#3f90f0" stroke-width="2.4"><path d="M1 6L5 10L13 1"/></svg></div><b style="left:1528px;top:889px">Execute</b>
<div class="cb" style="left:1637px;top:840px"><svg style="left:3px;top:4px" width="14" height="12" fill="none" stroke="#3f90f0" stroke-width="2.4"><path d="M1 6L5 10L13 1"/></svg></div><b style="left:1660px;top:843px">Read</b>
<div class="cb" style="left:1637px;top:863px"></div><b style="left:1660px;top:866px">Write</b>
<div class="cb" style="left:1637px;top:886px"><svg style="left:3px;top:4px" width="14" height="12" fill="none" stroke="#3f90f0" stroke-width="2.4"><path d="M1 6L5 10L13 1"/></svg></div><b style="left:1660px;top:889px">Execute</b>
<div class="cb" style="left:1769px;top:840px"><svg style="left:3px;top:4px" width="14" height="12" fill="none" stroke="#3f90f0" stroke-width="2.4"><path d="M1 6L5 10L13 1"/></svg></div><b style="left:1792px;top:843px">Read</b>
<div class="cb" style="left:1769px;top:863px"></div><b style="left:1792px;top:866px">Write</b>
<div class="cb" style="left:1769px;top:886px"><svg style="left:3px;top:4px" width="14" height="12" fill="none" stroke="#3f90f0" stroke-width="2.4"><path d="M1 6L5 10L13 1"/></svg></div><b style="left:1792px;top:889px">Execute</b>
<b style="left:1368px;top:928px">Absolute Notation</b>
<div class="sep" style="left:1364px;top:945px;width:526px"></div>
<div class="in" style="left:1368px;top:949px;width:354px"><b style="left:4px;top:3px">0755</b></div>

<!-- status bar -->
<div style="left:0;top:1002px;width:1906px;height:1px;background:#4a4a52"></div>
<div style="left:0;top:1003px;width:1906px;height:17px;background:#242424"></div>
<b style="left:8px;top:1005px">FPS</b><b style="left:43px;top:1005px">4.12</b>
<div class="sp" style="left:79px;top:1004px;width:1px;height:15px"></div>
<svg style="left:87px;top:1004px" width="15" height="15" viewBox="0 0 15 15"><path d="M7.5 1A6.5 6.5 0 0 1 13 11.5H2A6.5 6.5 0 0 1 7.5 1Z" fill="#eee"/><path d="M7.5 8L10 4" stroke="#242424" stroke-width="1.5"/></svg>
<b style="left:116px;top:1005px">0.00</b>
<div class="sp" style="left:152px;top:1004px;width:1px;height:15px"></div>
<svg style="left:160px;top:1004px" width="13" height="15" viewBox="0 0 13 15"><path d="M3 1H10V14H3Z" fill="#eee"/><path d="M0 3H13M0 6H13M0 9H13M0 12H13" stroke="#eee" stroke-dasharray="1.5 10"/></svg>
<b style="left:180px;top:1005px">254.88 MiB / 31.95 GiB</b>
<div class="sp" style="left:342px;top:1004px;width:1px;height:15px"></div>
</div></body></html>
